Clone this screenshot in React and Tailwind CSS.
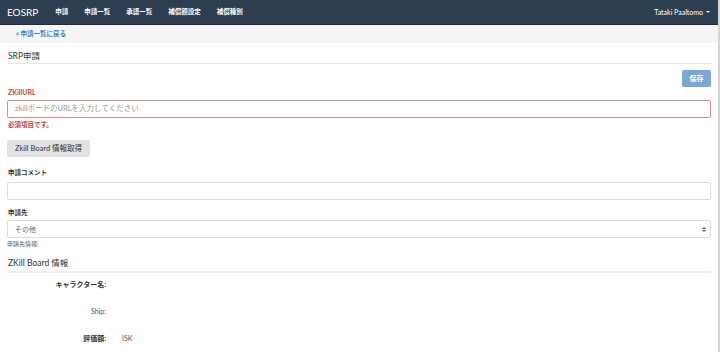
import React from 'react';

const NAV_ITEMS = ['申請', '申請一覧', '承認一覧', '補償額設定', '補償種別'];

const FONT = { fontFamily: 'Lato, "Noto Sans CJK JP", sans-serif' };

const App = () => {
  return (
    <div className="w-[720px] h-[352px] overflow-hidden bg-white text-[#333] border-r-2 border-[#d4d4d4]" style={FONT}>
      {/* Navbar */}
      <nav className="h-[25px] bg-[#2c3e50] border-b border-[#1f2d3a] flex items-center justify-between pl-[7px] pr-[8px]">
        <div className="flex items-center">
          <span className="text-white text-[10px] leading-none mr-[17px]">EOSRP</span>
          <ul className="flex items-center gap-[16px]">
            {NAV_ITEMS.map(item => (
              <li key={item} className="text-white text-[6.5px] font-bold leading-none">{item}</li>
            ))}
          </ul>
        </div>
        <div className="flex items-center gap-[3px] text-white text-[7px] leading-none">
          Tataki Paaltomo
          <span className="w-0 h-0 border-l-[2.5px] border-r-[2.5px] border-t-[2.5px] border-l-transparent border-r-transparent border-t-white"></span>
        </div>
      </nav>

      {/* Breadcrumb */}
      <div className="h-[18px] bg-[#f5f5f5] flex items-center pl-[16px]">
        <a className="text-[#3a7fc4] text-[6.5px] font-bold leading-none">« 申請一覧に戻る</a>
      </div>

      {/* Content */}
      <div className="px-[7px]">
        <h2 className="text-[8.5px] leading-none pt-[9px] pb-[2px] pl-[1px] border-b border-[#e5e5e5]">SRP申請</h2>

        <div className="flex justify-end mt-[6px]">
          <button className="w-[29px] h-[17px] rounded-[2px] bg-[#7ba7d6] text-white text-[7px] font-bold leading-none">保存</button>
        </div>

        <label className="block text-[#b94a48] text-[7px] font-bold leading-none mt-[2px] pl-[1px]">ZKillURL</label>
        <div className="mt-[4px] h-[18px] border border-[#d08c8a] rounded-[2px] flex items-center pl-[7px] text-[7.5px] text-[#9a9a9a]">
          zkillボードのURLを入力してください
        </div>
        <p className="text-[#b94a48] text-[6.5px] font-bold leading-none mt-[4px] pl-[1px]">必須項目です。</p>

        <button className="mt-[12px] h-[17px] w-[83px] rounded-[2px] bg-[#e2e2e2] text-[#333] text-[7.5px] leading-none">Zkill Board 情報取得</button>

        <label className="block text-[6.5px] font-bold leading-none mt-[13px] pl-[1px]">申請コメント</label>
        <div className="mt-[5px] h-[18px] border border-[#dcdcdc] rounded-[2px]"></div>

        <label className="block text-[6.5px] font-bold leading-none mt-[10px] pl-[1px]">申請先</label>
        <div className="mt-[4px] h-[18px] border border-[#dcdcdc] rounded-[2px] flex items-center justify-between pl-[7px] pr-[4px]">
          <span className="text-[7px] text-[#666] leading-none">その他</span>
          <span className="flex flex-col gap-[1px]">
            <span className="w-0 h-0 border-l-[2px] border-r-[2px] border-b-[2.5px] border-l-transparent border-r-transparent border-b-[#555]"></span>
            <span className="w-0 h-0 border-l-[2px] border-r-[2px] border-t-[2.5px] border-l-transparent border-r-transparent border-t-[#555]"></span>
          </span>
        </div>
        <p className="text-[6px] text-[#555] leading-none mt-[3px]">申請先情報:</p>

        <h2 className="text-[8.5px] leading-none mt-[12px] pb-[3px] pl-[1px] border-b-2 border-[#eeeeee]">ZKill Board 情報</h2>

        <dl className="grid grid-cols-[99px_1fr] gap-x-[16px] text-[7px] leading-none mt-[8px]">
          <dt className="text-right font-bold h-[27px]">キャラクター名:</dt>
          <dd></dd>
          <dt className="text-right h-[27px] text-[#555]">Ship:</dt>
          <dd></dd>
          <dt className="text-right font-bold">評価額:</dt>
          <dd className="text-[#555]">ISK</dd>
        </dl>
      </div>
    </div>
  );
};

export default App;
